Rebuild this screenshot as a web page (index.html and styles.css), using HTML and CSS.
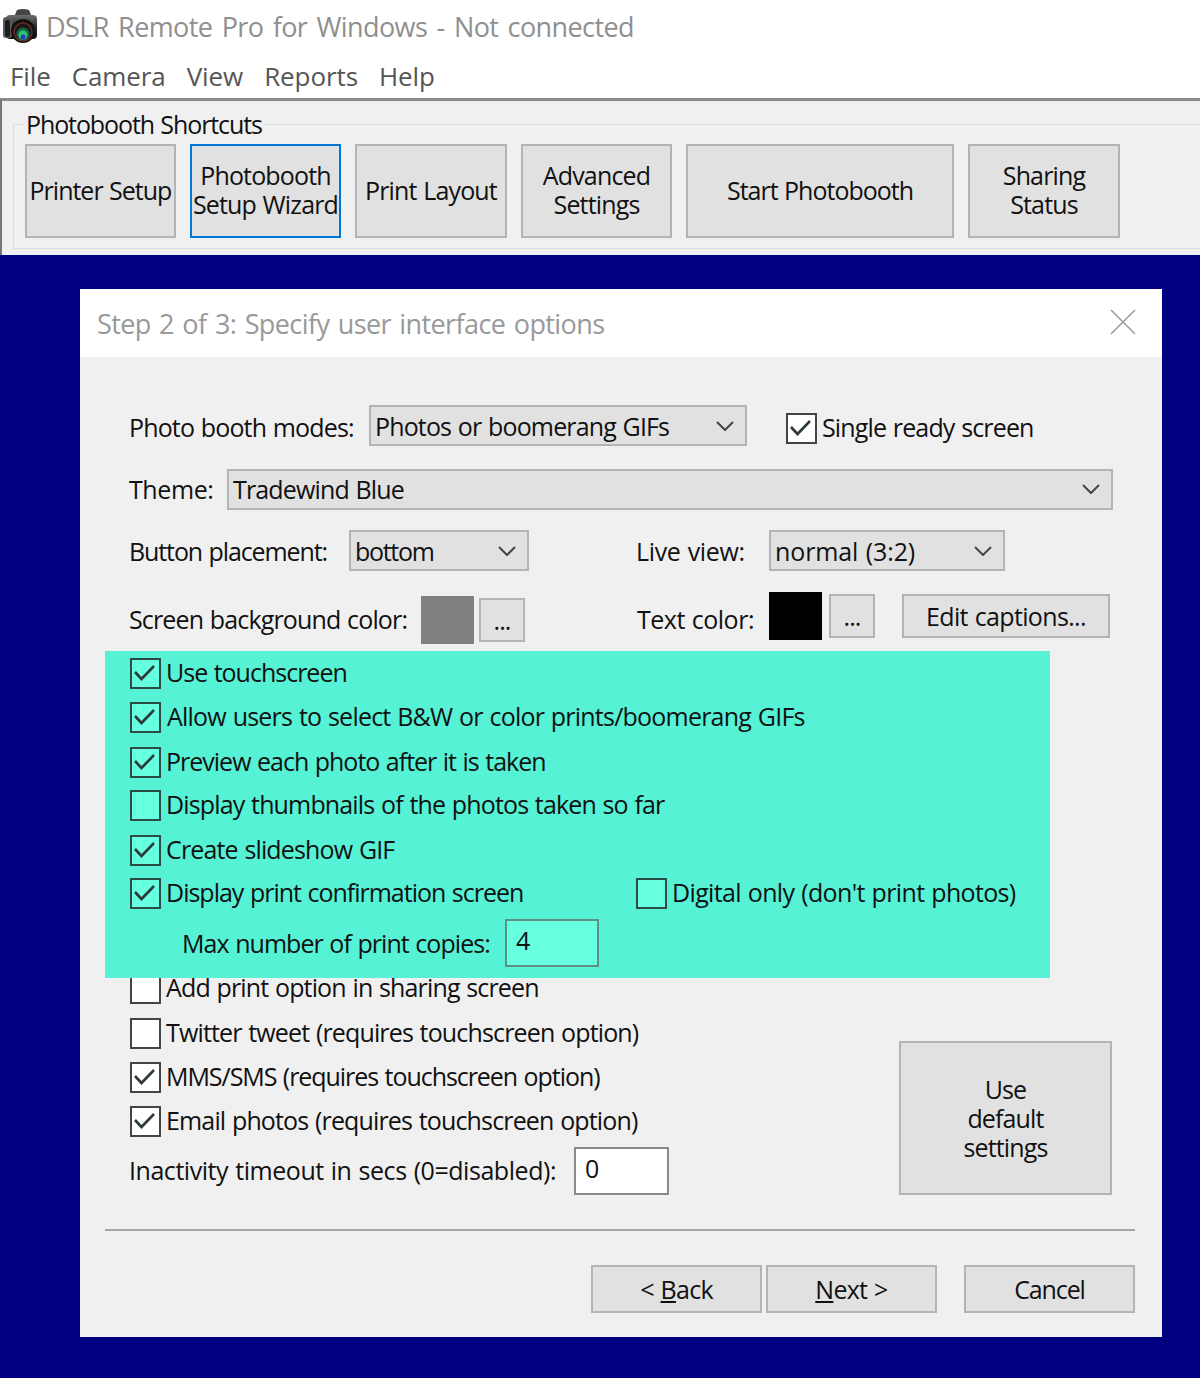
FILE: index.html
```html
<!DOCTYPE html>
<html lang="en">
<head>
    <meta charset="UTF-8">
    <title>DSLR Remote Pro for Windows - Not connected</title>
    <link rel="stylesheet" href="styles.css">
</head>
<body>

<div class="titlebar">
    <svg class="app-icon" width="36" height="36" viewBox="0 0 36 36">
        <defs>
            <linearGradient id="camBody" x1="0" y1="0" x2="0" y2="1">
                <stop offset="0" stop-color="#6e6e6e"/>
                <stop offset="0.5" stop-color="#2a2a2a"/>
                <stop offset="1" stop-color="#0c0c0c"/>
            </linearGradient>
        </defs>
        <path d="M12 9 L15 2 Q21 0 27 2 L30 9 Z" fill="#454545"/>
        <rect x="4" y="7" width="31" height="24" rx="4" fill="url(#camBody)"/>
        <rect x="1" y="9" width="9" height="21" rx="3" fill="#5a5a5a"/>
        <rect x="3" y="12" width="5" height="17" rx="2" fill="#1c1c1c"/>
        <circle cx="21" cy="23" r="12" fill="#111"/>
        <circle cx="21" cy="24" r="9" fill="#1a1a1a" stroke="#6b2a22" stroke-width="1.5"/>
        <circle cx="21" cy="26" r="6.5" fill="#0f6b45"/>
        <circle cx="21" cy="27" r="4.5" fill="#35c26a"/>
        <circle cx="21" cy="29" r="2.5" fill="#2238d8"/>
    </svg>
    <span class="title-text">DSLR Remote Pro for Windows - Not connected</span>
</div>

<div class="menubar">
    <span>File</span>
    <span>Camera</span>
    <span>View</span>
    <span>Reports</span>
    <span>Help</span>
</div>

<div class="toolbar">
    <div class="groupbox">
        <div class="group-title">Photobooth Shortcuts</div>
        <div class="shortcut-row">
            <button class="btn shortcut tight">Printer Setup</button>
            <button class="btn shortcut focused">Photobooth<br>Setup Wizard</button>
            <button class="btn shortcut plus-one">Print Layout</button>
            <button class="btn shortcut">Advanced<br>Settings</button>
            <button class="btn shortcut wide tight">Start Photobooth</button>
            <button class="btn shortcut plus-one">Sharing<br>Status</button>
        </div>
    </div>
</div>

<div class="desktop">
    <div class="dialog">
        <div class="dialog-title">
            <span>Step 2 of 3: Specify user interface options</span>
            <svg class="close-icon" width="26" height="26" viewBox="0 0 26 26">
                <path d="M1 1 L25 25 M25 1 L1 25" stroke="#9a9a9a" stroke-width="1.5" fill="none"/>
            </svg>
        </div>

        <div class="dialog-body">
            <div class="form-row row-modes">
                <span class="label lbl-modes">Photo booth modes:</span>
                <div class="select select-modes">Photos or boomerang GIFs<svg class="chevron" viewBox="0 0 18 10"><path d="M1 1 L9 9 L17 1"/></svg></div>
                <label class="check on-white single-ready">
                    <span class="box"><svg viewBox="0 0 27 27"><path d="M3 12 L9.5 19 L22 6"/></svg></span>
                    Single ready screen
                </label>
            </div>

            <div class="form-row row-theme">
                <span class="label lbl-theme">Theme:</span>
                <div class="select select-theme">Tradewind Blue<svg class="chevron" viewBox="0 0 18 10"><path d="M1 1 L9 9 L17 1"/></svg></div>
            </div>

            <div class="form-row row-placement">
                <span class="label lbl-placement">Button placement:</span>
                <div class="select select-placement">bottom<svg class="chevron" viewBox="0 0 18 10"><path d="M1 1 L9 9 L17 1"/></svg></div>
                <span class="label lbl-liveview">Live view:</span>
                <div class="select select-liveview">normal (3:2)<svg class="chevron" viewBox="0 0 18 10"><path d="M1 1 L9 9 L17 1"/></svg></div>
            </div>

            <div class="form-row row-colors">
                <span class="label lbl-background">Screen background color:</span>
                <span class="swatch swatch-grey"></span>
                <button class="btn dots dots-left">...</button>
                <span class="label lbl-textcolor">Text color:</span>
                <span class="swatch swatch-black"></span>
                <button class="btn dots dots-right">...</button>
                <button class="btn edit-captions">Edit captions...</button>
            </div>

            <div class="highlight">
                <label class="check gap-13 tight"><span class="box"><svg viewBox="0 0 27 27"><path d="M3 12 L9.5 19 L22 6"/></svg></span>Use touchscreen</label>
                <label class="check gap-14 allow-users"><span class="box"><svg viewBox="0 0 27 27"><path d="M3 12 L9.5 19 L22 6"/></svg></span>Allow users to select B&amp;W or color prints/boomerang GIFs</label>
                <label class="check gap-12 tight"><span class="box"><svg viewBox="0 0 27 27"><path d="M3 12 L9.5 19 L22 6"/></svg></span>Preview each photo after it is taken</label>
                <label class="check gap-14"><span class="box"></span>Display thumbnails of the photos taken so far</label>
                <label class="check gap-12"><span class="box"><svg viewBox="0 0 27 27"><path d="M3 12 L9.5 19 L22 6"/></svg></span>Create slideshow GIF</label>
                <div class="confirm-row">
                    <label class="check confirm tight"><span class="box"><svg viewBox="0 0 27 27"><path d="M3 12 L9.5 19 L22 6"/></svg></span>Display print confirmation screen</label>
                    <label class="check digital-only"><span class="box"></span>Digital only (don't print photos)</label>
                </div>
                <div class="copies-row">
                    <span class="label lbl-copies">Max number of print copies:</span>
                    <div class="textbox copies-box">4</div>
                </div>
            </div>

            <div class="lower">
                <div class="lower-left">
                    <label class="check on-white gap-14"><span class="box"></span>Add print option in sharing screen</label>
                    <label class="check on-white gap-13"><span class="box"></span>Twitter tweet (requires touchscreen option)</label>
                    <label class="check on-white gap-13 mms"><span class="box"><svg viewBox="0 0 27 27"><path d="M3 12 L9.5 19 L22 6"/></svg></span>MMS/SMS (requires touchscreen option)</label>
                    <label class="check on-white gap-10"><span class="box"><svg viewBox="0 0 27 27"><path d="M3 12 L9.5 19 L22 6"/></svg></span>Email photos (requires touchscreen option)</label>
                    <div class="timeout-row">
                        <span class="label lbl-timeout">Inactivity timeout in secs (0=disabled):</span>
                        <div class="textbox timeout-box">0</div>
                    </div>
                </div>
                <button class="btn defaults">Use<br>default<br>settings</button>
            </div>

            <div class="separator"></div>

            <div class="footer">
                <button class="btn nav">&lt; <u>B</u>ack</button>
                <button class="btn nav next"><u>N</u>ext &gt;</button>
                <button class="btn nav cancel">Cancel</button>
            </div>
        </div>
    </div>
</div>

</body>
</html>
```

FILE: styles.css
```css
* {
    box-sizing: border-box;
}

html, body {
    margin: 0;
    height: 100%;
}

body {
    width: 1200px;
    height: 1378px;
    overflow: hidden;
    background-color: #fff;
    color: #111;
    font-family: 'Open Sans', 'Noto Sans', sans-serif;
    font-size: 25px;
    letter-spacing: -0.85px;
    word-spacing: 1px;
    display: flex;
    flex-direction: column;
}

.titlebar {
    height: 52px;
    display: flex;
    align-items: center;
    padding-left: 2px;
    color: #8f8f8f;
    font-size: 27px;
    letter-spacing: -0.6px;
    word-spacing: 2.9px;
}

.app-icon {
    margin-right: 8px;
}

.menubar {
    height: 46px;
    padding: 2px 0 0 10px;
    display: flex;
    align-items: center;
    gap: 21px;
    color: #555;
    font-size: 26px;
    letter-spacing: -0.1px;
}

.toolbar {
    height: 157px;
    background-color: #f0f0f0;
    border-top: 3px solid #8a8a8a;
    border-left: 2px solid #777;
    padding: 23px 0 0 11px;
}

.groupbox {
    position: relative;
    height: 125px;
    border: 1px solid #dcdcdc;
    border-right: none;
    padding: 19px 0 0 11px;
}

.group-title {
    position: absolute;
    top: -16px;
    left: 9px;
    padding: 0 3px;
    background-color: #f0f0f0;
    line-height: 30px;
    letter-spacing: -1.1px;
}

.shortcut-row {
    display: flex;
    gap: 14px;
}

.btn {
    background-color: #e1e1e1;
    border: 2px solid #b4b4b4;
    color: #111;
    font: inherit;
    letter-spacing: inherit;
    word-spacing: inherit;
    padding: 0;
    text-align: center;
    white-space: nowrap;
}

.shortcut {
    width: 151px;
    height: 94px;
    padding-bottom: 2px;
    line-height: 29px;
}

.shortcut.plus-one {
    width: 152px;
}

.shortcut.wide {
    width: 268px;
}

.shortcut.focused {
    border: 2px solid #0078d7;
}

.tight {
    letter-spacing: -1px;
}

.desktop {
    flex: 1;
    background-color: #000080;
    padding: 34px 38px 0 80px;
}

.dialog {
    height: 1048px;
    background-color: #f0f0f0;
    display: flex;
    flex-direction: column;
}

.dialog-title {
    height: 68px;
    background-color: #fff;
    display: flex;
    align-items: center;
    justify-content: space-between;
    padding: 0 26px 0 17px;
    color: #999;
    font-size: 27px;
    letter-spacing: -0.6px;
    word-spacing: 2px;
}

.close-icon {
    margin-top: -3px;
}

.dialog-body {
    flex: 1;
    padding: 0 27px 0 25px;
}

.form-row {
    display: flex;
    align-items: center;
    padding-left: 24px;
}

.row-modes {
    height: 41px;
    margin-top: 48px;
}

.row-theme {
    height: 41px;
    margin-top: 23px;
}

.row-placement {
    height: 41px;
    margin-top: 20px;
}

.row-colors {
    height: 52px;
    margin-top: 21px;
}

.label {
    flex: none;
    white-space: nowrap;
}

.row-modes .label {
    padding-top: 2px;
}

.row-theme .label,
.row-theme .select {
    padding-bottom: 2px;
}

.row-colors .label {
    padding-top: 2px;
}

.lbl-modes { width: 240px; }
.lbl-theme { width: 98px; letter-spacing: -0.4px; }
.lbl-placement { width: 220px; letter-spacing: -1.1px; }
.lbl-liveview { width: 133px; margin-left: 107px; letter-spacing: -0.35px; }
.lbl-background { width: 292px; }
.lbl-textcolor { width: 132px; margin-left: 112px; letter-spacing: -0.5px; }
.lbl-copies { width: 323px; letter-spacing: -0.95px; padding-bottom: 1px; }
.lbl-timeout { width: 445px; letter-spacing: -0.45px; padding-bottom: 3px; }

.select {
    height: 41px;
    flex: none;
    background-color: #e1e1e1;
    border: 2px solid #b4b4b4;
    display: flex;
    align-items: center;
    justify-content: space-between;
    padding: 0 11px 0 4px;
}

.chevron {
    width: 18px;
    height: 10px;
    fill: none;
    stroke: #444;
    stroke-width: 2;
}

.select-modes { width: 378px; }
.select-theme { width: 886px; }
.select-placement { width: 180px; letter-spacing: -1.3px; }
.select-liveview { width: 236px; letter-spacing: -0.1px; }

.single-ready {
    margin-left: 39px;
    margin-top: 5px;
}

.swatch {
    width: 53px;
    height: 48px;
    flex: none;
}

.swatch-grey {
    background-color: #808080;
    margin-top: 4px;
}

.swatch-black {
    background-color: #000;
    margin-top: -4px;
}

.dots {
    width: 46px;
    height: 44px;
    flex: none;
    margin-left: 5px;
}

.dots-left {
    margin-top: 4px;
}

.dots-right {
    margin-left: 7px;
    margin-top: -4px;
}

.edit-captions {
    width: 208px;
    height: 44px;
    margin-left: 27px;
    margin-top: -4px;
    flex: none;
    letter-spacing: -0.65px;
}

.highlight {
    width: 945px;
    height: 327px;
    margin-top: 7px;
    background-color: #55f2d5;
    padding: 7px 0 0 25px;
    position: relative;
}

.check {
    display: flex;
    align-items: flex-start;
    height: 31px;
    gap: 5px;
    line-height: 28px;
    white-space: nowrap;
}

.allow-users {
    letter-spacing: -0.78px;
    gap: 6px;
}

.digital-only {
    letter-spacing: -0.65px;
}

.mms {
    letter-spacing: -1.05px;
}

.gap-10 { margin-bottom: 10px; }
.gap-12 { margin-bottom: 12px; }
.gap-13 { margin-bottom: 13px; }
.gap-14 { margin-bottom: 14px; }

.box {
    width: 31px;
    height: 31px;
    flex: none;
    border: 2px solid #2d4a44;
    background-color: #66ffe0;
}

.box svg {
    display: block;
    width: 27px;
    height: 27px;
    fill: none;
    stroke: #2d3a38;
    stroke-width: 2.6;
}

.on-white .box {
    background-color: #fff;
    border-color: #444;
}

.confirm-row {
    display: flex;
}

.confirm {
    width: 506px;
}

.copies-row {
    display: flex;
    align-items: center;
    margin-top: 10px;
    padding-left: 52px;
}

.textbox {
    height: 48px;
    flex: none;
    border: 2px solid #5f8f84;
    display: flex;
    align-items: center;
    padding: 0 0 6px 9px;
}

.copies-box {
    width: 94px;
    background-color: #66ffe0;
}

.lower {
    display: flex;
    justify-content: space-between;
    align-items: flex-end;
    margin-top: -5px;
    padding-left: 25px;
}

.timeout-row {
    display: flex;
    align-items: center;
    margin-left: -1px;
}

.timeout-box {
    width: 95px;
    background-color: #fff;
    border-color: #8a8a8a;
}

.defaults {
    width: 213px;
    height: 154px;
    margin-right: 23px;
    line-height: 29px;
}

.separator {
    height: 2px;
    background-color: #a8a8a8;
    margin-top: 34px;
}

.footer {
    display: flex;
    justify-content: flex-end;
    margin-top: 34px;
}

.nav {
    width: 171px;
    height: 48px;
    letter-spacing: -0.7px;
}

.next {
    margin-left: 4px;
}

.cancel {
    margin-left: 27px;
    letter-spacing: -1.1px;
}
```
